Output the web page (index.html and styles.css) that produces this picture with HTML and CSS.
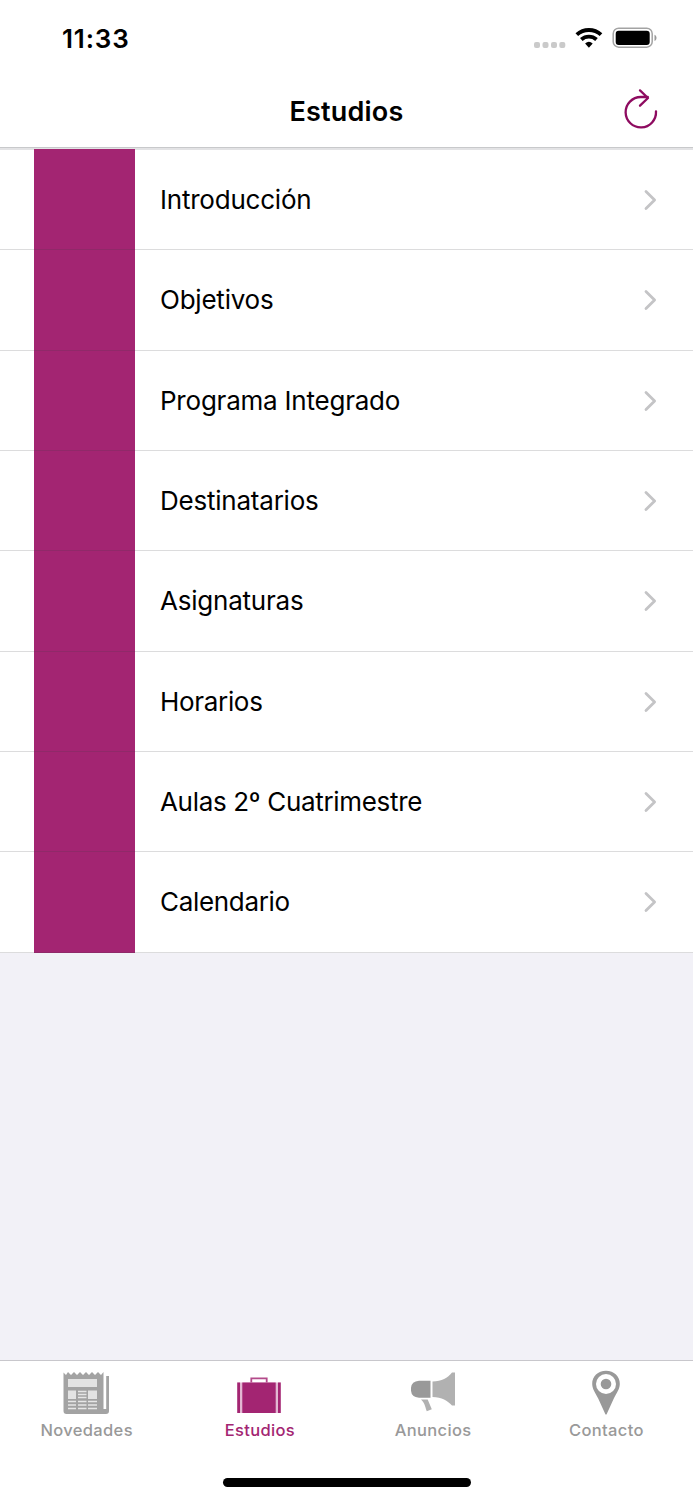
FILE: index.html
```html
<!DOCTYPE html>
<html lang="es">
<head>
<meta charset="utf-8">
<title>Estudios</title>
<link rel="stylesheet" href="styles.css">
</head>
<body>
<div class="screen">
  <header class="header">
    <div class="status">
      <span class="time">11:33</span>
      <svg class="status-icons" width="126" height="24" viewBox="0 0 126 24">
        <g fill="#cacaca"><rect x="2" y="16" width="6" height="6" rx="2"/><rect x="10.500" y="16" width="6" height="6" rx="2"/><rect x="19" y="16" width="6" height="6" rx="2"/><rect x="27.300" y="16" width="6" height="6" rx="2"/></g>
        <g fill="none" stroke="#000" stroke-width="3.900"><path d="M44.800 8.600a18 18 0 0 1 24.200 0"/><path d="M49.300 13.500a11.500 11.500 0 0 1 15.200 0"/></g>
        <path d="M53.100 17.400a5.700 5.700 0 0 1 7.600 0l-3.800 4.300z"/>
        <rect x="81.200" y="2.200" width="39" height="19" rx="5.500" fill="none" stroke="#a3a3a3" stroke-width="1.500"/>
        <rect x="83.700" y="4.700" width="34" height="14.200" rx="3"/>
        <path d="M122.500 8.800c2.700 1 2.700 5.200 0 6.200z" fill="#999"/>
      </svg>
    </div>
    <div class="nav">
      <h1 class="title">Estudios</h1>
      <svg class="refresh" width="36" height="44" viewBox="0 0 36 44" fill="none" stroke="#8e0b60" stroke-width="2.300" stroke-linecap="round" stroke-linejoin="round"><path d="M33 24.300a15.200 15.200 0 1 1-15.200-14.300h7M17 3.400l8 7.600-8 7.700"/></svg>
    </div>
  </header>
  <main class="list">
    <a class="row"><span class="swatch"></span><span class="label">Introducción</span><svg class="chevron" viewBox="0 0 16 22"><path d="m4 2.500 8.600 8.500L4 19.500"/></svg></a>
    <a class="row"><span class="swatch"></span><span class="label">Objetivos</span><svg class="chevron" viewBox="0 0 16 22"><path d="m4 2.500 8.600 8.500L4 19.500"/></svg></a>
    <a class="row"><span class="swatch"></span><span class="label">Programa Integrado</span><svg class="chevron" viewBox="0 0 16 22"><path d="m4 2.500 8.600 8.500L4 19.500"/></svg></a>
    <a class="row"><span class="swatch"></span><span class="label">Destinatarios</span><svg class="chevron" viewBox="0 0 16 22"><path d="m4 2.500 8.600 8.500L4 19.500"/></svg></a>
    <a class="row"><span class="swatch"></span><span class="label">Asignaturas</span><svg class="chevron" viewBox="0 0 16 22"><path d="m4 2.500 8.600 8.500L4 19.500"/></svg></a>
    <a class="row"><span class="swatch"></span><span class="label snug">Horarios</span><svg class="chevron" viewBox="0 0 16 22"><path d="m4 2.500 8.600 8.500L4 19.500"/></svg></a>
    <a class="row"><span class="swatch"></span><span class="label snug">Aulas 2º Cuatrimestre</span><svg class="chevron" viewBox="0 0 16 22"><path d="m4 2.500 8.600 8.500L4 19.500"/></svg></a>
    <a class="row"><span class="swatch"></span><span class="label snug">Calendario</span><svg class="chevron" viewBox="0 0 16 22"><path d="m4 2.500 8.600 8.500L4 19.500"/></svg></a>
  </main>
  <footer class="footer">
    <nav class="tabs">
      <a class="tab">
        <svg class="icon" viewBox="0 0 50 46">
          <path fill="#a3a3a3" d="M1.500 2.500l2.500 2.500 2-3 3 3 3-3 3 3 3-3 3 3 3-3 3 3 3-3 3 3 3-3 3 3 2.500-3V39h2.700V6H47v35q0 3-3 3H4.500q-3 0-3-3z"/>
          <path fill="#e3e3e3" d="M6 9h29v8H6zM6 20.500h8v8.500H6zM26 20.500h9v8.500h-9z"/>
          <path stroke="#e6e6e6" stroke-width="1.600" d="M16 21.500h8.500M16 24.500h8.500M16 27.500h8.500M6 31.500h8M6 35h8M6 38.500h8M16 31.500h8.500M16 35h8.500M16 38.500h8.500M26 31.500h9M26 35h9M26 38.500h9"/>
        </svg>
        <span class="tab-label">Novedades</span>
      </a>
      <a class="tab active">
        <svg class="icon briefcase" viewBox="0 0 50 46">
          <rect x="3" y="12.500" width="44" height="30.500" fill="#e3b8d3"/>
          <path fill="#a32572" d="M3.300 12.500h2.700V43H3.300zM8.300 12.500h33.400V43H8.300zM44 12.500h2.700V43H44z"/>
          <path fill="none" stroke="#b34a8a" stroke-width="1.800" d="M17.300 12.500v-4.200h15.400v4.200"/>
        </svg>
        <span class="tab-label">Estudios</span>
      </a>
      <a class="tab">
        <svg class="icon" viewBox="0 0 50 46">
          <path fill="#999" d="M11 10.700h11.500v17H11q-7.500-.7-8-7v-3q.5-6.300 8-7z"/>
          <path fill="#b1b1b1" d="M24.500 11.500C34 11 39.500 8 44 2.500h3v33h-3C39.500 30.500 34 27.500 24.500 27z"/>
          <path fill="#b1b1b1" d="M13 29.500h6.700l4.100 9.700-5 2.100c-1.300-3-1.600-8-5.800-11.800z"/>
        </svg>
        <span class="tab-label">Anuncios</span>
      </a>
      <a class="tab">
        <svg class="icon" viewBox="0 0 50 46">
          <path fill="#999" d="M25 .7c8 0 14 5.500 13.800 13.300-.2 5.500-3 8.500-6 14.500L25.500 44.500h-1L17.200 28.500c-3-6-5.800-9-6-14.500C11 6.200 17 .7 25 .7z"/>
          <circle cx="25" cy="14" r="10" fill="#fff"/><circle cx="25" cy="14" r="5.300" fill="#999"/>
        </svg>
        <span class="tab-label">Contacto</span>
      </a>
    </nav>
    <div class="home"></div>
  </footer>
</div>
</body>
</html>
```
FILE: styles.css
```css
* { box-sizing: border-box; }
body { margin: 0; font-family: Inter, "Noto Sans", sans-serif; color: #000; }
.screen { width: 693px; height: 1500px; display: flex; flex-direction: column; background: #f2f1f7; overflow: hidden; }
.header { height: 149px; flex: none; background: #fff; border-bottom: 1px solid #e3e3e5; box-shadow: inset 0 -1px #c8c9cb; }
.status { height: 74px; padding: 2px 35px 0 62px; display: flex; align-items: center; justify-content: space-between; }
.time { font-size: 26px; font-weight: 600; letter-spacing: .85px; }
.nav { height: 74px; display: grid; grid-template-columns: 1fr auto 1fr; align-items: center; }
.title { grid-column: 2; margin: 0; font-size: 27px; font-weight: 600; letter-spacing: .2px; }
.refresh { justify-self: end; margin-right: 34px; margin-top: -5px; }
.list { flex: none; height: 803.500px; display: grid; grid-template-rows: repeat(8, 1fr); background: #fff; border-top: 1px solid #e3e3e5; }
.row { display: grid; grid-template-columns: 101px 1fr 16px; align-items: center; padding: 0 35px 0 33.700px; position: relative; }
.row::after { content: ""; position: absolute; left: 0; right: 0; bottom: 0; height: 1px; background: rgba(60, 60, 67, .18); }
.row:first-child .swatch { margin-top: -1px; }
.swatch { align-self: stretch; background: #a32572; }
.label { justify-self: start; margin-left: 25.300px; font-size: 26px; line-height: 34px; letter-spacing: -.22px; white-space: nowrap; }
.snug { letter-spacing: -.32px; }
.chevron { width: 16px; height: 22px; fill: none; stroke: #c4c4c6; stroke-width: 2.800; stroke-linecap: round; stroke-linejoin: round; }
.footer { margin-top: auto; height: 140px; background: #fff; border-top: 1px solid #c8c7cc; display: flex; flex-direction: column; align-items: center; }
.tabs { width: 100%; height: 117px; display: grid; grid-template-columns: repeat(4, 1fr); }
.tab { display: flex; flex-direction: column; align-items: center; padding-top: 9px; color: #999; }
.active { color: #a32572; }
.icon { width: 50px; height: 46px; }
.briefcase { margin-right: 1px; }
.tab-label { margin-top: 3px; font-size: 16.500px; line-height: 22px; font-weight: 450; letter-spacing: .35px; }
.active .tab-label { font-weight: 500; }
.home { width: 248px; height: 8.500px; border-radius: 5px; background: #000; }
```
